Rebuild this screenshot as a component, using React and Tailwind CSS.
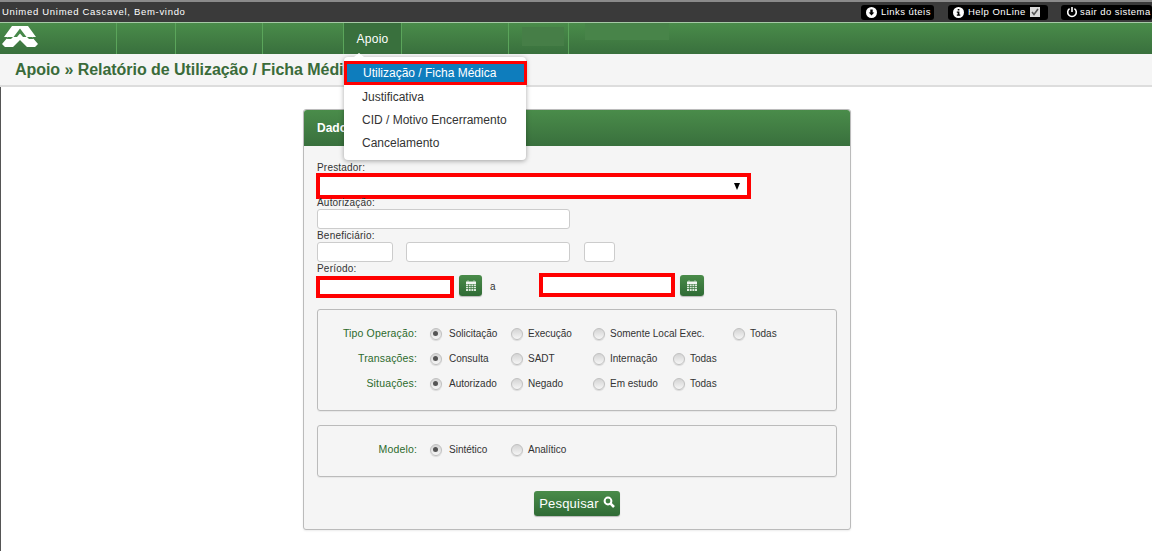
function Radio({ checked }) {
  return (
    <span className="mx-[0.5px] flex h-[12px] w-[12px] shrink-0 items-center justify-center rounded-full border border-[#c0c0c0] bg-gradient-to-b from-[#d4d4d4] to-[#f6f6f6] shadow-[0_1px_1px_rgba(0,0,0,0.12)]">
      {checked && <span className="h-[5px] w-[5px] rounded-full bg-[#555]"></span>}
    </span>
  );
}

function Option({ label, checked, width }) {
  return (
    <div className="flex items-center" style={{ width }}>
      <Radio checked={checked} />
      <span className={`${checked ? "ml-[7px]" : "ml-[5px]"} whitespace-nowrap text-[10px] text-[#333]`}>{label}</span>
    </div>
  );
}

function RadioRow({ label, options }) {
  return (
    <div className="flex h-[25px] items-center">
      <div className="w-[99px] text-right text-[10.5px] tracking-[0.15px] text-[#2c6a2c]">{label}:</div>
      <div className="ml-[12px] flex">
        {options.map((o) => (
          <Option key={o.label} {...o} />
        ))}
      </div>
    </div>
  );
}

function CalendarButton({ width }) {
  return (
    <button className={`flex h-[21px] ${width} items-center justify-center rounded-[3px] bg-gradient-to-b from-[#4a8c4a] to-[#2f6b35] shadow-[0_1px_1px_rgba(0,0,0,0.25)]`}>
      <svg width="12" height="12" viewBox="0 0 12 12">
        <path d="M2.5 0.5h1v1h-1zM8.5 0.5h1v1h-1z" fill="#eef4ee" />
        <rect x="1" y="1.5" width="10" height="2.5" fill="#f2f6f2" />
        <path
          d="M1 4.5h2v1.5H1zM3.7 4.5h2v1.5h-2zM6.4 4.5h2v1.5h-2zM9 4.5h2v1.5H9zM1 6.8h2v1.5H1zM3.7 6.8h2v1.5h-2zM6.4 6.8h2v1.5h-2zM9 6.8h2v1.5H9zM1 9.1h2v1.9H1zM3.7 9.1h2v1.9h-2zM6.4 9.1h2v1.9h-2zM9 9.1h2v1.9H9z"
          fill="#dbe8db"
        />
      </svg>
    </button>
  );
}

function TopButton({ icon, children, className = "" }) {
  return (
    <div className={`flex h-[15px] items-center whitespace-nowrap rounded-[3px] bg-black text-[9.5px] tracking-[0.45px] text-white ${className}`}>
      {icon}
      {children}
    </div>
  );
}

const label = "block h-[13px] text-[10px] leading-[13px] tracking-[0.2px] text-[#333]";
const input = "h-[20px] rounded-[3px] border border-[#ccc] bg-white";
const separator = "border-l border-[#5ba55b]";

export default function App() {
  return (
    <div className="relative h-[551px] w-[1152px] overflow-hidden bg-white font-['Liberation_Sans',Arial,sans-serif]">
      {/* Top bar */}
      <div className="flex h-[22px] items-center justify-between border-t-2 border-[#8a8a8a] bg-[#3a3a3a] pl-[2px]">
        <span className="text-[9.5px] tracking-[0.7px] text-white">Unimed Unimed Cascavel, Bem-vindo</span>
        <div className="flex items-center">
          <TopButton
            className="w-[73px] pl-[5px]"
            icon={
              <svg className="mr-[4px]" width="11" height="11" viewBox="0 0 11 11">
                <circle cx="5.5" cy="5.5" r="5.5" fill="white" />
                <path d="M4.3 2.5h2.4v3h1.6L5.5 8.6 2.7 5.5h1.6z" fill="black" />
              </svg>
            }
          >
            Links úteis
          </TopButton>
          <TopButton
            className="ml-[14px] w-[100px] pl-[5px]"
            icon={
              <svg className="mr-[4px]" width="11" height="11" viewBox="0 0 11 11">
                <circle cx="5.5" cy="5.5" r="5.5" fill="white" />
                <path d="M4.7 2h1.7v1.5H4.7zM3.8 4.5h2.6v3h.9v1.2H3.8V7.5h.9V5.7h-.9z" fill="black" />
              </svg>
            }
          >
            Help OnLine
            <svg className="ml-[4px]" width="10" height="10" viewBox="0 0 10 10">
              <rect width="10" height="10" fill="#d8d8d8" />
              <path d="M2 5l2 2.5L8 2" fill="none" stroke="#555" strokeWidth="1.6" />
            </svg>
          </TopButton>
          <TopButton
            className="ml-[13px] w-[91px] pl-[5px]"
            icon={
              <svg className="mr-[2px]" width="12" height="12" viewBox="0 0 12 12" fill="none" stroke="white" strokeWidth="1.6">
                <path d="M3.6 2.6a4.3 4.3 0 1 0 4.8 0" />
                <path d="M6 1v5" />
              </svg>
            }
          >
            sair do sistema
          </TopButton>
        </div>
      </div>

      {/* Nav */}
      <div className="flex h-[32px] border-t border-[#a6c9a6] bg-gradient-to-b from-[#4a8c4a] to-[#39703d]">
        <div className="w-[116px] pl-[2px] pt-[3px]">
          <svg width="36" height="22" viewBox="0 0 36 22">
            <path d="M10 0H26L34 11H30L36 18L33 21H25L18 14L11 21H3L0 18L6 11H2Z" fill="white" />
            <path d="M18 2.5L11.5 11H15L18 7.5L21 11H24.5Z" fill="#47884a" />
            <path d="M6 11H11L9 13H4ZM30 11H25L27 13H32Z" fill="#47884a" />
          </svg>
        </div>
        <div className={`w-[59px] ${separator}`}></div>
        <div className={`w-[87px] ${separator}`}></div>
        <div className={`w-[81px] ${separator}`}></div>
        <div className={`flex w-[58px] items-center justify-center bg-[#39703d] text-[12px] tracking-[0.3px] text-white ${separator}`}>
          Apoio
        </div>
        <div className={`w-[107px] ${separator}`}></div>
        <div className={`w-[60px] ${separator}`}>
          <div className="ml-[13px] mt-[4px] h-[19px] w-[42px] bg-[#467e47]"></div>
        </div>
        <div className={separator}>
          <div className="ml-[16px] h-[17px] w-[84px] bg-[#488449]"></div>
        </div>
      </div>

      {/* Sub header */}
      <div className="flex h-[33px] items-center border-b-2 border-[#ddd] bg-[#f5f5f5] pl-[15px]">
        <h1 className="text-[16px] font-bold tracking-[-0.05px] text-[#3a6b3a]">Apoio » Relatório de Utilização / Ficha Médica</h1>
      </div>

      {/* Content */}
      <div className="flex h-[464px] border-l border-[#555] pl-[302px] pt-[22px]">
        <div className="h-[421px] w-[548px] rounded-[3px] border border-[#bbb] bg-[#f5f5f5] shadow-[0_1px_2px_rgba(0,0,0,0.08)]">
          <div className="flex h-[36px] items-center rounded-t-[3px] bg-gradient-to-b from-[#4a8c4a] to-[#39703d] pl-[13px] text-[12px] font-bold text-white">
            Dados
          </div>
          <div className="px-[13px] pt-[15px]">
            <label className={label}>Prestador:</label>
            <div className="ml-[-1px] mt-[-1px] flex h-[26px] w-[435px] items-center justify-end border-[4px] border-[#ff0000] bg-white pr-[7px]">
              <span className="h-0 w-0 border-x-[3.5px] border-t-[7px] border-x-transparent border-t-black"></span>
            </div>
            <label className={`${label} mt-[-3px]`}>Autorização:</label>
            <div className={`${input} w-[253px]`}></div>
            <label className={label}>Beneficiário:</label>
            <div className="flex">
              <div className={`${input} w-[76px]`}></div>
              <div className={`${input} ml-[13px] w-[164px]`}></div>
              <div className={`${input} ml-[14px] w-[31px]`}></div>
            </div>
            <label className={label}>Período:</label>
            <div className="mt-[-2px] flex h-[25px] items-start">
              <div className="ml-[-1px] mt-[3px] h-[22px] w-[138px] border-[4px] border-[#ff0000] bg-white"></div>
              <div className="ml-[5px] mt-[2px]"><CalendarButton width="w-[23px]" /></div>
              <span className="ml-[8px] mt-[7px] w-[49px] text-[10px] leading-[13px] text-[#333]">a</span>
              <div className="h-[24px] w-[136px] border-[4px] border-[#ff0000] bg-white"></div>
              <div className="ml-[5px] mt-[2px]"><CalendarButton width="w-[24px]" /></div>
            </div>

            <div className="mt-[11px] h-[102px] w-[520px] rounded-[3px] border border-[#bbb] pt-[11px] shadow-[0_1px_1px_rgba(0,0,0,0.06)]">
              <RadioRow
                label="Tipo Operação"
                options={[
                  { label: "Solicitação", checked: true, width: 81 },
                  { label: "Execução", width: 82 },
                  { label: "Somente Local Exec.", width: 140 },
                  { label: "Todas", width: 60 },
                ]}
              />
              <RadioRow
                label="Transações"
                options={[
                  { label: "Consulta", checked: true, width: 81 },
                  { label: "SADT", width: 82 },
                  { label: "Internação", width: 80 },
                  { label: "Todas", width: 60 },
                ]}
              />
              <RadioRow
                label="Situações"
                options={[
                  { label: "Autorizado", checked: true, width: 81 },
                  { label: "Negado", width: 82 },
                  { label: "Em estudo", width: 80 },
                  { label: "Todas", width: 60 },
                ]}
              />
            </div>

            <div className="mt-[14px] h-[52px] w-[520px] rounded-[3px] border border-[#bbb] pt-[11px] shadow-[0_1px_1px_rgba(0,0,0,0.06)]">
              <RadioRow
                label="Modelo"
                options={[
                  { label: "Sintético", checked: true, width: 81 },
                  { label: "Analítico", width: 80 },
                ]}
              />
            </div>

            <div className="mt-[14px] flex justify-center">
              <button className="flex h-[25px] w-[86px] items-center justify-center rounded-[3px] bg-gradient-to-b from-[#4a8c4a] to-[#2f6b35] text-[13px] tracking-[0.2px] text-white shadow-[0_1px_1px_rgba(0,0,0,0.25)]">
                Pesquisar
                <svg className="ml-[4px] mb-[4px]" width="12" height="12" viewBox="0 0 12 12" fill="none" stroke="white">
                  <circle cx="5" cy="5" r="3.4" strokeWidth="2" />
                  <path d="M7.6 7.6L11 11" strokeWidth="2.6" />
                </svg>
              </button>
            </div>
          </div>
        </div>
      </div>

      {/* Dropdown menu */}
      <div className="absolute left-[344px] top-[57px] h-[103px] w-[182px] rounded-[4px] bg-white text-[12px] text-[#333] shadow-[0_1px_5px_rgba(0,0,0,0.35)]">
        <span className="absolute left-[10px] top-[-4px] h-0 w-0 border-x-[5px] border-b-[4px] border-x-transparent border-b-white"></span>
        <div className="absolute left-0 top-[4px] flex h-[24px] w-[183px] items-center border-[3px] border-[#ff0000] bg-[#0e7dbd] pl-[16px] text-white">
          Utilização / Ficha Médica
        </div>
        <div className="flex flex-col pl-[18px] pt-[28px]">
          <div className="flex h-[23px] items-center">Justificativa</div>
          <div className="flex h-[23px] items-center">CID / Motivo Encerramento</div>
          <div className="flex h-[23px] items-center">Cancelamento</div>
        </div>
      </div>
    </div>
  );
}
